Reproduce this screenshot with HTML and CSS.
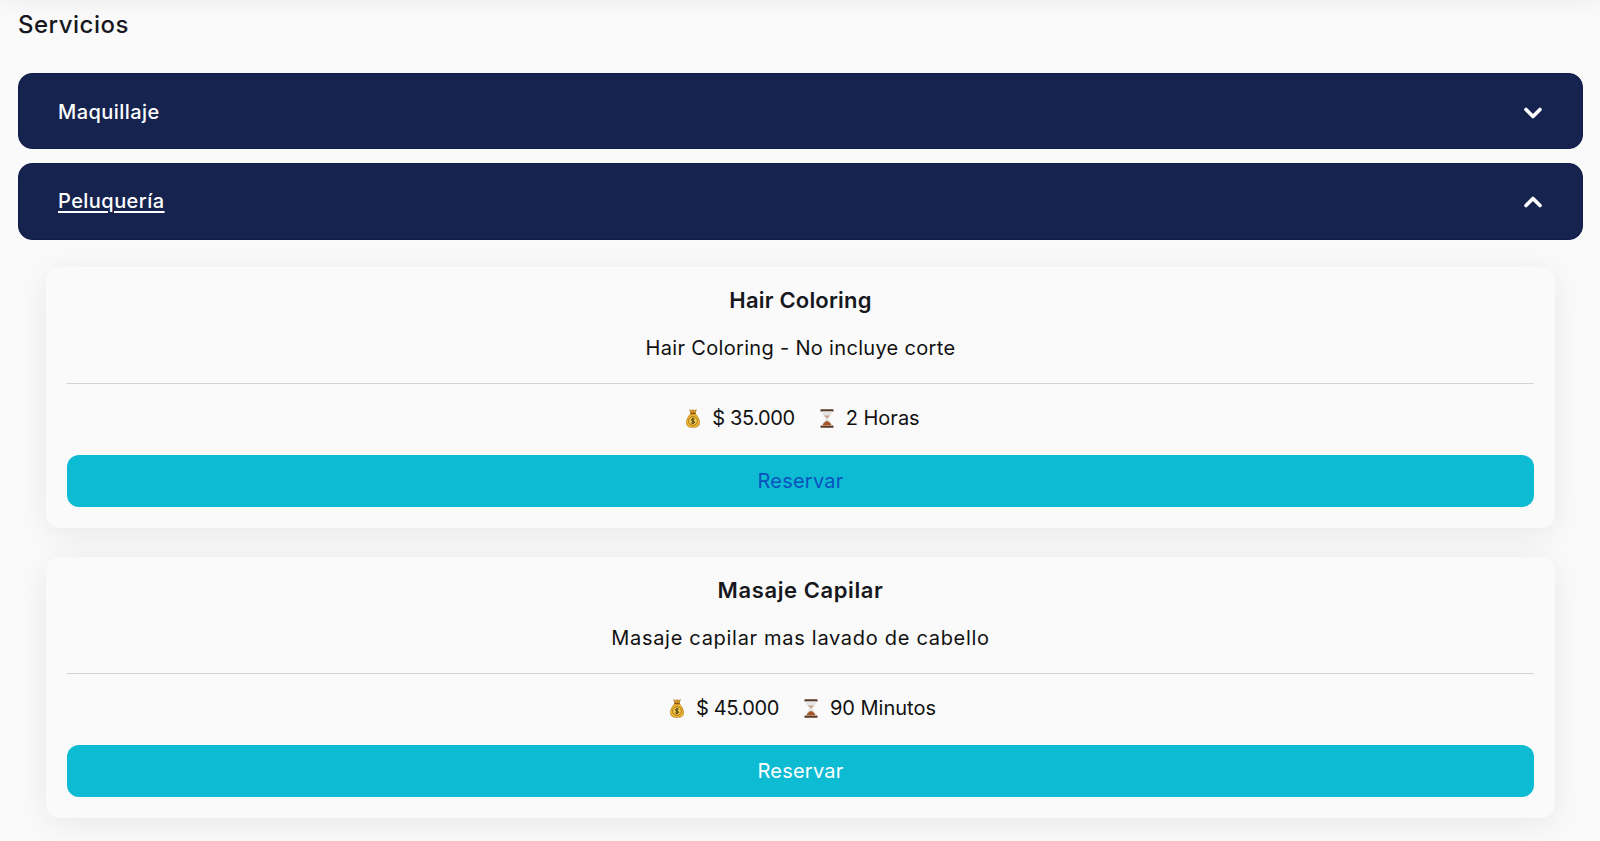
FILE: index.html
```html
<!DOCTYPE html>
<html lang="es">
<head>
<meta charset="utf-8">
<title>Servicios</title>
<link rel="stylesheet" href="styles.css">
</head>
<body>
<div class="topshade"></div>
<main class="page">
  <h1 class="heading">Servicios</h1>
  <div class="acc acc-closed">
    <span>Maquillaje</span>
    <svg class="chev" viewBox="0 0 20 14" width="20" height="14"><path d="M3 4.5 10 11.5 17 4.5" fill="none" stroke="#fff" stroke-width="3.6" stroke-linecap="round" stroke-linejoin="round"/></svg>
  </div>
  <div class="acc acc-open">
    <span class="acc-link">Peluquería</span>
    <svg class="chev" viewBox="0 0 20 14" width="20" height="14"><path d="M3 11.5 10 4.5 17 11.5" fill="none" stroke="#fff" stroke-width="3.6" stroke-linecap="round" stroke-linejoin="round"/></svg>
  </div>
  <div class="cards">
    <article class="card">
      <h2 class="card-title">Hair Coloring</h2>
      <p class="card-desc">Hair Coloring - No incluye corte</p>
      <hr class="rule">
      <div class="meta">
        <svg class="emoji" viewBox="0 0 14 19" width="14" height="19"><path d="M3.6.6 5.4 1.6 7 .6l1.6 1 1.8-1L9.2 4.4H4.8z" fill="#d9982a" stroke="#9a6a18" stroke-width=".5"/><path d="M4.8 4.6h4.4C11.6 7.2 13.7 10.6 13.7 13.6c0 3.6-2.6 4.9-6.7 4.9S.3 17.2.3 13.6C.3 10.6 2.4 7.2 4.8 4.6z" fill="#ecb22e" stroke="#b07a1c" stroke-width=".6"/><rect x="4.2" y="3.8" width="5.6" height="1.5" rx=".7" fill="#8a5a14"/><circle cx="7" cy="12" r="4.3" fill="#f6cf4e" stroke="#8a5a14" stroke-width=".7"/><path d="M8.7 10.4c-.5-.8-3.3-.9-3.4.5-.1 1.6 3.5.9 3.4 2.4-.1 1.3-3 1.2-3.5.3M7 8.8v6.4" fill="none" stroke="#3d2a0c" stroke-width=".9"/></svg>
        <span class="meta-val meta-price">$ 35.000</span>
        <svg class="emoji" viewBox="0 0 14 19" width="14" height="19"><rect x="0.5" y="0.2" width="13" height="2.2" rx=".5" fill="#5b3a2a"/><rect x="0.5" y="16.6" width="13" height="2.2" rx=".5" fill="#5b3a2a"/><path d="M2 2.4h10c0 3.8-3.6 5.2-3.6 7.1s3.6 3.3 3.6 7.1H2c0-3.8 3.6-5.2 3.6-7.1S2 6.2 2 2.4z" fill="#e4e4e2"/><path d="M4 6.4h6C9.2 8 7.5 8.6 7 9.6 6.5 8.6 4.8 8 4 6.4z" fill="#c9a68c"/><path d="M2.6 16.6c.4-2.6 2.8-4 4.4-4.6 1.6.6 4 2 4.4 4.6z" fill="#a4552a"/></svg>
        <span class="meta-val">2 Horas</span>
      </div>
      <div class="btn btn-active">Reservar</div>
    </article>
    <article class="card">
      <h2 class="card-title card-title-wide">Masaje Capilar</h2>
      <p class="card-desc card-desc-wide">Masaje capilar mas lavado de cabello</p>
      <hr class="rule">
      <div class="meta">
        <svg class="emoji" viewBox="0 0 14 19" width="14" height="19"><path d="M3.6.6 5.4 1.6 7 .6l1.6 1 1.8-1L9.2 4.4H4.8z" fill="#d9982a" stroke="#9a6a18" stroke-width=".5"/><path d="M4.8 4.6h4.4C11.6 7.2 13.7 10.6 13.7 13.6c0 3.6-2.6 4.9-6.7 4.9S.3 17.2.3 13.6C.3 10.6 2.4 7.2 4.8 4.6z" fill="#ecb22e" stroke="#b07a1c" stroke-width=".6"/><rect x="4.2" y="3.8" width="5.6" height="1.5" rx=".7" fill="#8a5a14"/><circle cx="7" cy="12" r="4.3" fill="#f6cf4e" stroke="#8a5a14" stroke-width=".7"/><path d="M8.7 10.4c-.5-.8-3.3-.9-3.4.5-.1 1.6 3.5.9 3.4 2.4-.1 1.3-3 1.2-3.5.3M7 8.8v6.4" fill="none" stroke="#3d2a0c" stroke-width=".9"/></svg>
        <span class="meta-val meta-price">$ 45.000</span>
        <svg class="emoji" viewBox="0 0 14 19" width="14" height="19"><rect x="0.5" y="0.2" width="13" height="2.2" rx=".5" fill="#5b3a2a"/><rect x="0.5" y="16.6" width="13" height="2.2" rx=".5" fill="#5b3a2a"/><path d="M2 2.4h10c0 3.8-3.6 5.2-3.6 7.1s3.6 3.3 3.6 7.1H2c0-3.8 3.6-5.2 3.6-7.1S2 6.2 2 2.4z" fill="#e4e4e2"/><path d="M4 6.4h6C9.2 8 7.5 8.6 7 9.6 6.5 8.6 4.8 8 4 6.4z" fill="#c9a68c"/><path d="M2.6 16.6c.4-2.6 2.8-4 4.4-4.6 1.6.6 4 2 4.4 4.6z" fill="#a4552a"/></svg>
        <span class="meta-val">90 Minutos</span>
      </div>
      <div class="btn">Reservar</div>
    </article>
  </div>
</main>
</body>
</html>
```
FILE: styles.css
```css
* { box-sizing: border-box; }
html, body { height: 100%; }
body {
  margin: 0;
  background: #fafafa;
  color: #16181d;
  font-family: "Inter", "Noto Sans", sans-serif;
  overflow: hidden;
  position: relative;
}
.topshade {
  position: absolute;
  top: -20px;
  left: 0;
  right: 0;
  height: 20px;
  box-shadow: 0 2px 22px rgba(0,0,0,.06);
}
.page { padding: 8px 17px 0 18px; }
.heading {
  margin: 0 0 31px;
  height: 34px;
  font-size: 24px;
  line-height: 34px;
  font-weight: 500;
  letter-spacing: .5px;
  color: #16181d;
}
.acc {
  height: 76px;
  margin-bottom: 14px;
  padding: 0 39px 0 39px;
  display: flex;
  align-items: center;
  justify-content: space-between;
  background: #15234e;
  border: 1px solid #101c4a;
  border-radius: 14px;
  color: #fff;
  font-size: 20px;
  font-weight: 500;
  letter-spacing: .45px;
}
.acc-closed { padding-top: 2px; }
.acc-open { height: 77px; margin-bottom: 27px; padding-bottom: 2px; }
.acc-link { text-decoration: underline; text-underline-offset: 3px; text-decoration-thickness: 1.5px; }
.chev { display: block; }
.cards {
  padding: 0 28px;
  display: flex;
  flex-direction: column;
  gap: 29px;
}
.card {
  height: 261px;
  padding: 16px 21px 21px;
  background: #fafafa;
  border-radius: 14px;
  box-shadow: 0 6px 34px rgba(0,0,0,.075);
  text-align: center;
}
.card-title {
  margin: 0;
  height: 34px;
  font-size: 22px;
  line-height: 34px;
  font-weight: 600;
  letter-spacing: .2px;
}
.card-title-wide { letter-spacing: .6px; }
.card-desc {
  margin: 16px 0 0;
  height: 30px;
  font-size: 20px;
  line-height: 30px;
  letter-spacing: .32px;
  color: #111;
}
.card-desc-wide { letter-spacing: .7px; }
.rule {
  margin: 20px 0 0;
  border: 0;
  border-top: 1px solid #d4d4d4;
}
.meta {
  margin-top: 17px;
  height: 34px;
  padding-left: 5px;
  display: flex;
  align-items: center;
  justify-content: center;
  font-size: 20px;
  color: #111;
}
.emoji { display: block; }
.meta-val { margin-left: 12px; margin-right: 25px; }
.meta-val:last-child { margin-right: 0; }
.meta-price { letter-spacing: -.4px; }
.btn {
  margin-top: 20px;
  height: 52px;
  border-radius: 12px;
  background: #0dbbd3;
  color: #fff;
  font-size: 20px;
  line-height: 52px;
  letter-spacing: .2px;
}
.btn-active { color: #0a53be; }
```
